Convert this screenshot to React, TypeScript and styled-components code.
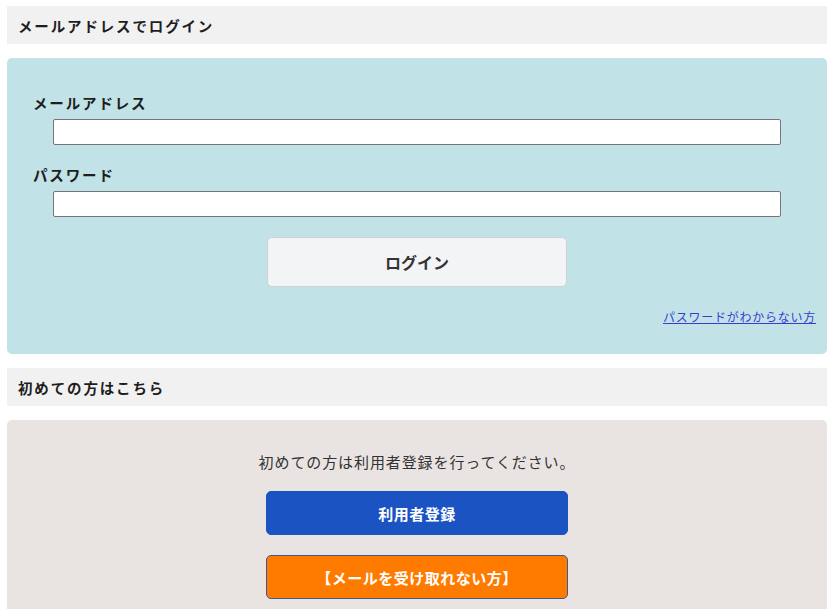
import styled, { createGlobalStyle } from "styled-components";

const GlobalStyle = createGlobalStyle`
  * {
    box-sizing: border-box;
  }

  body {
    margin: 0;
    background: #ffffff;
    font-family: "Noto Sans CJK JP", "Noto Sans", sans-serif;
    color: #222222;
  }
`;

function App() {
  return (
    <>
      <GlobalStyle />
      <Page>
        <SectionTitle>メールアドレスでログイン</SectionTitle>
        <LoginPanel>
          <FieldLabel>メールアドレス</FieldLabel>
          <InputRow>
            <TextInput type="email" />
          </InputRow>
          <FieldLabel $spaced>パスワード</FieldLabel>
          <InputRow>
            <TextInput type="password" />
          </InputRow>
          <LoginButton type="button">ログイン</LoginButton>
          <ForgotRow>
            <ForgotLink href="#">パスワードがわからない方</ForgotLink>
          </ForgotRow>
        </LoginPanel>
        <SectionTitle>初めての方はこちら</SectionTitle>
        <RegisterPanel>
          <Notice>初めての方は利用者登録を行ってください。</Notice>
          <ActionButton type="button" $variant="primary">
            利用者登録
          </ActionButton>
          <ActionButton type="button" $variant="warning">
            【メールを受け取れない方】
          </ActionButton>
        </RegisterPanel>
      </Page>
    </>
  );
}

export default App;

const Page = styled.div`
  display: flex;
  flex-direction: column;
  gap: 14px;
  padding: 6px 8px 0 7px;
`;

const SectionTitle = styled.h2`
  margin: 0;
  height: 38px;
  display: flex;
  align-items: center;
  padding-left: 11px;
  background: #f1f1f1;
  font-size: 14.5px;
  font-weight: 700;
  letter-spacing: 1.85px;
  color: #1e1e1e;
`;

const LoginPanel = styled.div`
  display: flex;
  flex-direction: column;
  padding: 34px 11px 28px 11px;
  border-radius: 5px;
  background: #c1e3e7;
`;

const FieldLabel = styled.label<{ $spaced?: boolean }>`
  display: block;
  padding-left: 15px;
  margin-top: ${(props) => (props.$spaced ? "19px" : "0")};
  font-size: 14.5px;
  line-height: 22px;
  font-weight: 700;
  letter-spacing: 1.85px;
  color: #1e1e1e;
`;

const InputRow = styled.div`
  padding: 5px 35px 0 35px;
`;

const TextInput = styled.input`
  display: block;
  width: 100%;
  height: 26px;
  border: 1px solid #767676;
  border-radius: 2px;
  background: #ffffff;
  padding: 2px 4px;
  font-size: 14px;
`;

const LoginButton = styled.button`
  align-self: center;
  width: 300px;
  height: 50px;
  margin-top: 20px;
  border: 1px solid #cfd3d6;
  border-radius: 5px;
  background: #f3f4f6;
  font-family: inherit;
  font-size: 16px;
  font-weight: 700;
  color: #333333;
  cursor: pointer;
`;

const ForgotRow = styled.div`
  display: flex;
  justify-content: flex-end;
  margin-top: 21px;
`;

const ForgotLink = styled.a`
  font-size: 12px;
  line-height: 18px;
  letter-spacing: 0.75px;
  color: #3b3bd0;
  text-decoration: underline;
`;

const RegisterPanel = styled.div`
  display: flex;
  flex-direction: column;
  align-items: center;
  gap: 20px;
  padding: 31px 0 20px;
  border-radius: 5px;
  background: #e9e4e2;
`;

const Notice = styled.p`
  margin: 0 0 -2px;
  font-size: 15px;
  line-height: 22px;
  letter-spacing: 0.9px;
  color: #333333;
`;

const ActionButton = styled.button<{ $variant: "primary" | "warning" }>`
  width: 302px;
  height: 44px;
  border-radius: 5px;
  border: 1px solid
    ${(props) => (props.$variant === "primary" ? "#1c53c3" : "#3e5a8c")};
  background: ${(props) =>
    props.$variant === "primary" ? "#1c53c3" : "#ff7b00"};
  font-family: inherit;
  font-size: 15px;
  font-weight: 700;
  letter-spacing: 0.5px;
  color: #ffffff;
  cursor: pointer;
`;
